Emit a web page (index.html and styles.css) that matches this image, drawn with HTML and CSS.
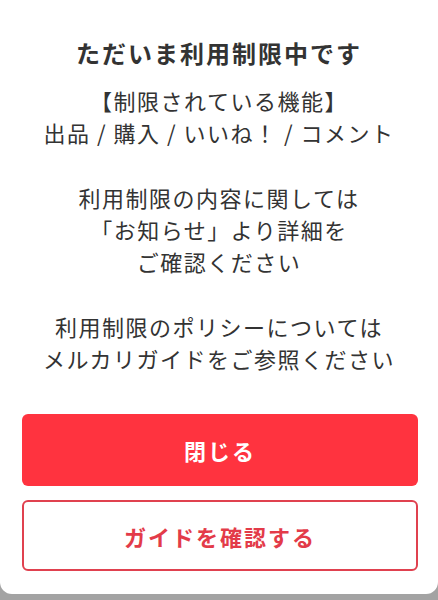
FILE: index.html
```html
<!DOCTYPE html>
<html lang="ja">
<head>
    <meta charset="UTF-8">
    <meta name="viewport" content="width=device-width, initial-scale=1.0">
    <title>利用制限</title>
    <link rel="stylesheet" href="styles.css">
</head>
<body>
    <div class="dialog">
        <h1 class="title">ただいま利用制限中です</h1>
        <div class="message">
            <p>【制限されている機能】<br>出品 / 購入 / いいね！ / コメント</p>
            <p>利用制限の内容に関しては<br>「お知らせ」より詳細を<br>ご確認ください</p>
            <p>利用制限のポリシーについては<br>メルカリガイドをご参照ください</p>
        </div>
        <div class="actions">
            <button class="btn btn-primary">閉じる</button>
            <button class="btn btn-outline">ガイドを確認する</button>
        </div>
    </div>
</body>
</html>
```

FILE: styles.css
```css
* {
    margin: 0;
    padding: 0;
    box-sizing: border-box;
}

body {
    background-color: #a3a3a3;
    font-family: "Noto Sans CJK JP", "Noto Sans", sans-serif;
    color: #333;
}

.dialog {
    background-color: #fff;
    height: 594px;
    border-radius: 0 0 12px 12px;
    padding-top: 37px;
}

.title {
    font-size: 24px;
    font-weight: bold;
    line-height: 32px;
    letter-spacing: 2px;
    text-align: center;
    color: #333;
}

.message {
    margin-top: 15px;
    font-size: 22px;
    line-height: 32.25px;
    letter-spacing: 1.5px;
    text-align: center;
}

.message p + p {
    margin-top: 32.25px;
}

.actions {
    display: flex;
    flex-direction: column;
    gap: 14px;
    margin: 40px 20px 0 22px;
}

.btn {
    font-family: inherit;
    font-size: 22px;
    font-weight: bold;
    letter-spacing: 2px;
    border-radius: 6px;
    cursor: pointer;
}

.btn-primary {
    height: 72px;
    background-color: #ff333f;
    border: none;
    color: #fff;
}

.btn-outline {
    height: 71px;
    background-color: #fff;
    border: 2px solid #e0414f;
    color: #e33b49;
}
```
